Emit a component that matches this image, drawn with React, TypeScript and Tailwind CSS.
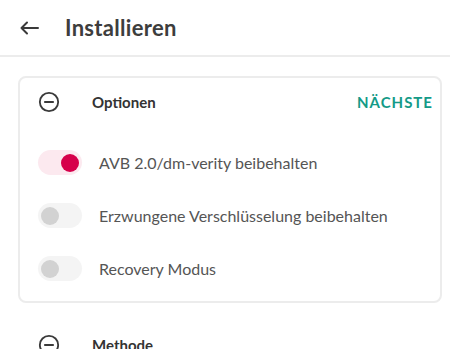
import React from "react";

// --- Atoms ---

const MinusCircle: React.FC = () => (
  <svg width="22" height="22" viewBox="0 0 24 24" fill="none" stroke="#3a3a3a" strokeWidth="2" strokeLinecap="round">
    <circle cx="12" cy="12" r="10" />
    <line x1="7.5" y1="12" x2="16.5" y2="12" />
  </svg>
);

const Toggle: React.FC<{ on?: boolean }> = ({ on }) => (
  <div
    className={`w-[44px] h-[25px] rounded-full flex items-center px-[3px] ${
      on ? "bg-[#fce9ef] justify-end" : "bg-[#f4f4f4] justify-start"
    }`}
  >
    <div className={`w-[18px] h-[18px] rounded-full ${on ? "bg-[#d6004b]" : "bg-[#d2d2d2]"}`} />
  </div>
);

const OptionRow: React.FC<{ label: string; on?: boolean }> = ({ label, on }) => (
  <div className="h-[53px] flex items-center gap-[17px] pl-[18px]">
    <Toggle on={on} />
    <span className="text-[16px] text-[#555]">{label}</span>
  </div>
);

const SectionHead: React.FC<{ title: string; action?: string }> = ({ title, action }) => (
  <div className="h-[48px] flex items-center pl-[18px] pr-[7px]">
    <MinusCircle />
    <span className="ml-[32px] text-[15px] font-bold text-[#333] flex-1">{title}</span>
    {action && (
      <span className="text-[15px] font-bold tracking-[1px] text-[#149a87]">{action}</span>
    )}
  </div>
);

export default function App() {
  return (
    <div className="w-[450px] h-[349px] overflow-hidden bg-white" style={{ fontFamily: "Lato, 'Noto Sans', sans-serif" }}>
      <header className="h-[57px] flex items-center pl-[20px] border-b-2 border-[#ececec]">
        <svg width="19" height="14" viewBox="0 0 19 14" fill="none" stroke="#3a3a3a" strokeWidth="2" strokeLinecap="round" strokeLinejoin="round">
          <path d="M18 7H1.5M7 1.5L1.5 7L7 12.5" />
        </svg>
        <h1 className="ml-[26px] text-[22px] font-bold text-[#3d3d3d] tracking-[0.3px]">Installieren</h1>
      </header>

      <div className="pl-[18px] pr-[8px] pt-[19px]">
        <div className="border-2 border-[#ececec] rounded-[8px] pb-[6px]">
          <SectionHead title="Optionen" action="NÄCHSTE" />
          <div className="h-[10px]" />
          <OptionRow label="AVB 2.0/dm-verity beibehalten" on />
          <OptionRow label="Erzwungene Verschlüsselung beibehalten" />
          <OptionRow label="Recovery Modus" />
        </div>
      </div>

      <div className="pl-[18px] pr-[8px] pt-[16px]">
        <div className="border-2 border-transparent">
          <SectionHead title="Methode" />
        </div>
      </div>
    </div>
  );
}
